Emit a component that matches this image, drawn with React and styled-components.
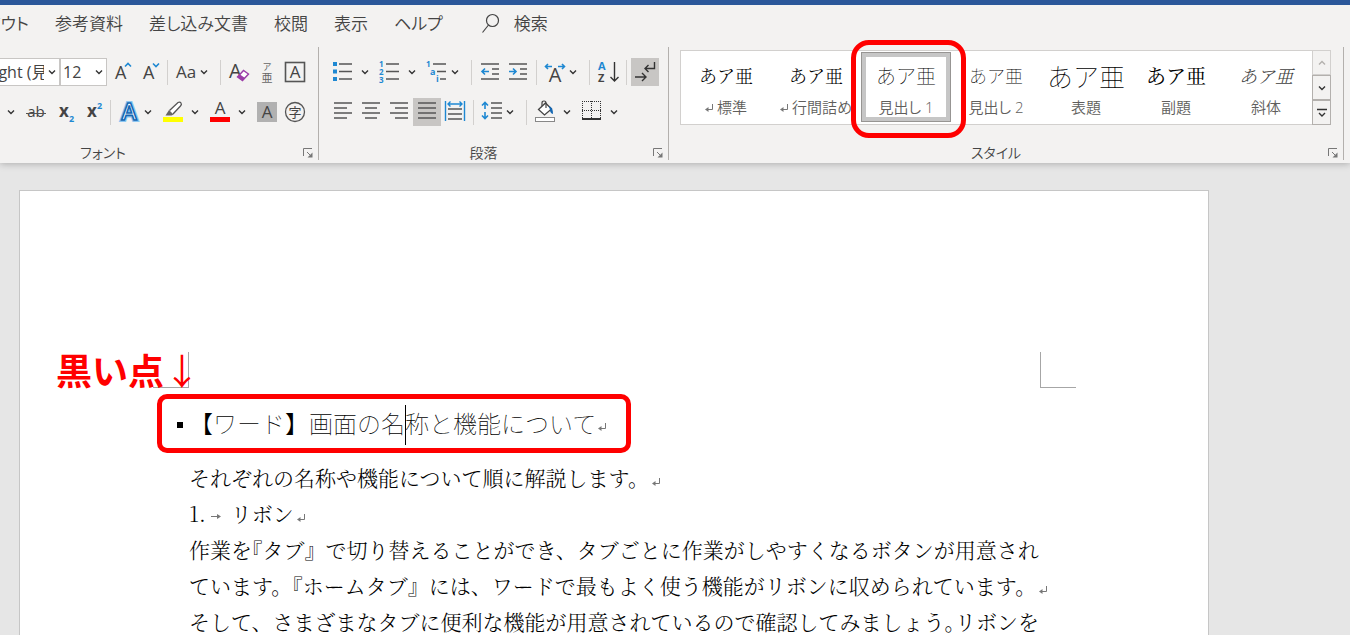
import React, { useState } from "react";
import styled, { createGlobalStyle } from "styled-components";

const BLUE = "#1e88d2";
const INK = "#444444";
const RED = "#ff0000";

const GlobalStyle = createGlobalStyle`
  * {
    box-sizing: border-box;
  }
  body {
    margin: 0;
    color: ${INK};
    font-family: "Open Sans", "Noto Sans CJK JP", sans-serif;
    text-spacing-trim: space-all;
  }
  button, select {
    margin: 0;
    padding: 0;
    border: 0;
    background: transparent;
    color: inherit;
    font: inherit;
  }
  svg {
    display: block;
    overflow: visible;
    flex: none;
  }
`;

const Window = styled.div`
  height: 100vh;
  display: flex;
  flex-direction: column;
  overflow: hidden;
  background-color: #e6e6e6;
`;

const Ribbon = styled.header`
  flex: none;
  border-top: 5px solid #2b579a;
  background-color: #f3f2f1;
  box-shadow: 0 1px 7px rgba(0, 0, 0, 0.25);
`;

const Tabs = styled.nav`
  height: 36px;
  display: flex;
  align-items: center;
  gap: 26px;
  font-size: 17px;
  font-family: "Noto Sans CJK JP", sans-serif;
  font-weight: 350;
  font-feature-settings: "palt";
  white-space: nowrap;
`;

const Tab = styled.button`
  flex: none;
  line-height: 24px;
`;

const ClippedTab = styled(Tab)`
  width: 29px;
  display: flex;
  justify-content: flex-end;
  overflow: hidden;
`;

const Search = styled(Tab)`
  display: flex;
  align-items: center;
  gap: 15px;
  margin-left: 13px;
`;

const Groups = styled.div`
  display: flex;
  padding: 6px 6px 3px 0;
`;

const Group = styled.section`
  width: ${(props) => props.$w};
  flex: ${(props) => (props.$grow ? "1" : "none")};
  min-width: 0;
  height: 113px;
  display: flex;
  flex-direction: column;
  gap: 12px;
  padding-top: ${(props) => (props.$grow ? "3px" : "11px")};
  border-right: 1px solid #b3b0ad;
`;

const Row = styled.div`
  height: 28px;
  display: flex;
  align-items: center;
  padding-left: ${(props) => (props.$inset ? "10px" : "0")};
`;

const Footer = styled.div`
  height: 16px;
  display: flex;
  align-items: center;
  margin-top: auto;
  margin-left: ${(props) => props.$shift || "0"};
`;

const Caption = styled.span`
  flex: 1;
  text-align: center;
  font-family: "Noto Sans CJK JP", sans-serif;
  font-size: 14px;
  font-weight: 350;
  line-height: 16px;
  font-feature-settings: "palt";
`;

const Launcher = styled.button`
  width: 20px;
  height: 16px;
  display: flex;
  align-items: center;
  justify-content: center;
`;

const IconButton = styled.button`
  width: ${(props) => props.$w || 28}px;
  height: 28px;
  flex: none;
  background-color: ${(props) => (props.$on ? "#c8c6c4" : "transparent")};
  &:hover {
    background-color: #c8c6c4;
  }
`;

const ArrowButton = styled.button`
  width: 16px;
  height: 28px;
  flex: none;
  display: flex;
  align-items: center;
  justify-content: center;
  margin-right: 3px;
`;

const Sep = styled.span`
  width: 1px;
  height: 25px;
  flex: none;
  margin: 0 4px 0 ${(props) => props.$before || 2}px;
  background-color: #d2d0ce;
`;

const Combo = styled.label`
  position: relative;
  width: ${(props) => props.$w}px;
  height: 28px;
  flex: none;
  display: flex;
  overflow: hidden;
  border: 1px solid #c8c6c4;
  border-left-width: ${(props) => (props.$open ? "0" : "1px")};
  background-color: #ffffff;
`;

const Select = styled.select`
  appearance: none;
  flex: none;
  width: ${(props) => props.$w}px;
  margin-left: ${(props) => props.$shift || 0}px;
  padding-left: 2px;
  font-size: 16px;
`;

const ComboArrow = styled.span`
  position: absolute;
  top: 0;
  right: 0;
  width: 15px;
  height: 100%;
  display: flex;
  align-items: center;
  justify-content: center;
  background-color: #ffffff;
  pointer-events: none;
`;

const GalleryFrame = styled.div`
  padding: 0 12px 0 11px;
`;

const Gallery = styled.div`
  height: 75px;
  display: flex;
  border: 1px solid #d2d0ce;
  background-color: #ffffff;
`;

const Swatches = styled.div`
  flex: 1;
  min-width: 0;
  display: flex;
  align-items: flex-start;
  padding-top: 1px;
`;

const Swatch = styled.button`
  position: relative;
  width: 90px;
  height: 70px;
  flex: none;
  display: flex;
  flex-direction: column;
  align-items: center;
  white-space: nowrap;
  outline: ${(props) => (props.$on ? "1px solid #979593" : "none")};
  outline-offset: -1px;
  box-shadow: ${(props) => (props.$on ? "inset 0 0 0 5px #c6c6c6" : "none")};
`;

const Sample = styled.span`
  height: 32px;
  margin-top: 7px;
  display: flex;
  align-items: center;
  color: ${(props) => props.$color || "#000000"};
  font-family: ${(props) => (props.$sans ? "" : '"Noto Serif CJK JP", ')} "Noto Sans CJK JP", sans-serif;
  font-size: ${(props) => props.$size || 18}px;
  font-weight: ${(props) => props.$weight || 300};
  font-style: ${(props) => (props.$italic ? "italic" : "normal")};
`;

const SwatchName = styled.span`
  height: 20px;
  margin-top: 5px;
  display: flex;
  align-items: center;
  gap: 4px;
  color: #605e5c;
  font-family: "Open Sans", "Noto Sans CJK JP", sans-serif;
  font-size: 15px;
  font-weight: 350;
  font-feature-settings: "palt";
  white-space: pre;
`;

const NameMark = styled.span`
  padding-top: 4px;
`;

const Scroller = styled.div`
  width: 19px;
  margin: -1px;
  display: flex;
  flex-direction: column;
`;

const ScrollButton = styled.button`
  flex: 1;
  display: flex;
  align-items: center;
  justify-content: center;
  border: 1px solid ${(props) => (props.disabled ? "#d2d0ce" : "#b3b0ad")};
  background-color: #f3f2f1;
`;

const Ring = styled.span`
  position: absolute;
  top: ${(props) => props.$top}px;
  left: ${(props) => props.$left}px;
  width: ${(props) => props.$w}px;
  height: ${(props) => props.$h}px;
  z-index: 2;
  border: 5px solid ${RED};
  border-radius: ${(props) => props.$r}px;
  pointer-events: none;
`;

const Workspace = styled.main`
  flex: 1;
  min-height: 0;
  display: flex;
  padding: 27px 141px 0 19px;
`;

const Sheet = styled.article`
  position: relative;
  flex: 1;
  padding-top: 161px;
  border: 1px solid #c6c6c6;
  border-bottom: 0;
  background-color: #ffffff;
  color: #000000;
`;

const CropMarks = styled.div`
  display: flex;
  justify-content: space-between;
  margin: 0 132px 0 133px;
`;

const CropMark = styled.span`
  width: 36px;
  height: 36px;
  border: solid #a6a6a6;
  border-width: ${(props) => (props.$right ? "0 0 1px 1px" : "0 1px 1px 0")};
`;

const Note = styled.strong`
  position: absolute;
  top: 152px;
  left: 36px;
  display: flex;
  color: ${RED};
  font-family: "Noto Sans CJK JP", sans-serif;
  font-size: 36px;
  line-height: 52px;
`;

const NoteArrow = styled.span`
  font-weight: 400;
`;

const HeadingRow = styled.div`
  position: relative;
  height: 36px;
  display: flex;
  align-items: center;
  gap: 6px;
  margin: 17px 0 18px 157px;
`;

const Bullet = styled.span`
  width: 6px;
  height: 6px;
  margin-top: 4px;
  background-color: #000000;
`;

const Heading = styled.h1`
  margin: 0;
  display: flex;
  align-items: center;
  font-family: "Noto Sans CJK JP", sans-serif;
  font-size: 24px;
  font-weight: 100;
  line-height: 36px;
  white-space: nowrap;
`;

const Caret = styled.span`
  width: 1px;
  height: 40px;
  margin: 2px -1px -2px 0;
  background-color: #000000;
`;

const HeadingMark = styled.span`
  padding: 8px 0 0 2px;
`;

const Text = styled.p`
  margin: 0 0 0 169px;
  font-family: "Noto Serif CJK JP", "Noto Sans CJK JP", serif;
  font-size: 21px;
  font-weight: 300;
  line-height: 36px;
  white-space: nowrap;
`;

const Half = styled.span`
  font-feature-settings: "halt";
`;

const Mark = styled.span`
  display: inline-block;
  margin-left: 3px;
`;

const TabMark = styled.span`
  display: inline-block;
  margin: 0 10px 2px 5px;
`;

const Chevron = ({ color = "#333333", up }) => (
  <svg width="8" height="8" fill="none" stroke={color} strokeWidth="1.4">
    <path d={up ? "M1 5.5l3-3 3 3" : "M1 2.5l3 3 3-3"} />
  </svg>
);

const Return = () => (
  <svg width="8" height="8" fill="none" stroke="#777777">
    <path d="M7.5 0v5.5H2" />
    <path d="M0 5.5L3.5 3v5z" fill="#777777" stroke="none" />
  </svg>
);

const Icon = ({ w = 28, children }) => (
  <svg
    width={w}
    height="28"
    fill="none"
    stroke="#555555"
    strokeWidth="1.6"
    fontFamily="Open Sans, Noto Sans CJK JP, sans-serif"
  >
    {children}
  </svg>
);

const T = ({ x, y, size, fill = INK, bold, middle, children }) => (
  <text
    x={x}
    y={y}
    fontSize={size}
    fill={fill}
    stroke="none"
    fontWeight={bold ? 700 : 400}
    textAnchor={middle ? "middle" : "start"}
  >
    {children}
  </text>
);

const Tool = ({ label, w, on, children }) => (
  <IconButton aria-label={label} $w={w} $on={on}>
    <Icon w={w}>{children}</Icon>
  </IconButton>
);

const More = ({ label }) => (
  <ArrowButton aria-label={label + "のオプション"}>
    <Chevron />
  </ArrowButton>
);

const GroupFooter = ({ children, shift }) => (
  <Footer $shift={shift}>
    <Caption>{children}</Caption>
    <Launcher aria-label={children + "の設定"}>
      <svg width="10" height="10" fill="none" stroke="#777777">
        <path d="M.5 9V1.5H9M4 5l4 4" />
        <path d="M9.5 5.5v5h-5z" fill="#777777" stroke="none" />
      </svg>
    </Launcher>
  </Footer>
);

const FontGroup = () => (
  <Group $w="319px">
    <Row>
      <Combo $w={60} $open>
        <Select aria-label="フォント名" $w={120} $shift={-16}>
          <option>Light (見出し)</option>
        </Select>
        <ComboArrow>
          <Chevron />
        </ComboArrow>
      </Combo>
      <Combo $w={47}>
        <Select aria-label="フォント サイズ" $w={46}>
          <option>12</option>
        </Select>
        <ComboArrow>
          <Chevron />
        </ComboArrow>
      </Combo>
      <Tool label="フォントの拡大" w={30}>
        <T x="8" y="21" size="18">A</T>
        <path d="M18 8.5l3-3 3 3" stroke={BLUE} />
      </Tool>
      <Tool label="フォントの縮小">
        <T x="6" y="21" size="18">A</T>
        <path d="M16 5.5l3 3 3-3" stroke={BLUE} />
      </Tool>
      <Sep />
      <Tool label="文字種の変換" w={46}>
        <T x="4" y="20" size="17">Aa</T>
        <path d="M29 12.5l3 3 3-3" stroke="#333333" strokeWidth="1.4" />
      </Tool>
      <Sep />
      <Tool label="書式のクリア">
        <T x="4" y="20" size="20">A</T>
        <path d="M12.5 19l6-6.5 5 3.5-6 6.5z" fill="#ffffff" stroke="#9b3da8" strokeWidth="1.4" />
        <path d="M12.5 19l2.5-2.5 5 3.5-2.5 2.5z" fill="#9b3da8" stroke="none" />
      </Tool>
      <Tool label="ルビ">
        <T x="14" y="12" size="9" fill="#666666" middle>ア</T>
        <T x="14" y="24" size="11" fill="#666666" middle>亜</T>
      </Tool>
      <Tool label="囲み線">
        <rect x="4.5" y="4.5" width="19" height="19" />
        <T x="14" y="20" size="17" middle>A</T>
      </Tool>
    </Row>
    <Row>
      <Tool label="下線のオプション" w={22}>
        <path d="M8 12.5l3 3 3-3" stroke="#333333" strokeWidth="1.4" />
      </Tool>
      <Tool label="取り消し線" w={30}>
        <T x="14" y="19" size="15" middle>ab</T>
        <path d="M4 15.5h20" strokeWidth="1" />
      </Tool>
      <Tool label="下付き">
        <T x="7" y="19" size="17" bold>x</T>
        <T x="17" y="24" size="9" fill={BLUE} bold>2</T>
      </Tool>
      <Tool label="上付き">
        <T x="7" y="19" size="17" bold>x</T>
        <T x="17" y="11" size="9" fill={BLUE} bold>2</T>
      </Tool>
      <Sep />
      <Tool label="文字の効果" w={25}>
        <g fontSize="23" fontWeight="600" textAnchor="middle">
          <text x="14" y="22" stroke="#8cc6f0" strokeWidth="4">A</text>
          <text x="14" y="22" stroke="#1467b3" strokeWidth="1.6" fill="#ffffff">A</text>
        </g>
      </Tool>
      <More label="文字の効果" />
      <Tool label="蛍光ペン">
        <rect x="4" y="19" width="20" height="5" fill="#ffff00" stroke="none" />
        <path d="M10.5 12.5L19 4.5q2-1 3 .5t-.5 3L14 16" fill="#ffffff" strokeWidth="1.3" />
        <path d="M10 12l4.5 4.5-2 1H6.5z" fill="#666666" stroke="none" />
      </Tool>
      <More label="蛍光ペン" />
      <Tool label="フォントの色">
        <T x="14" y="16" size="17" middle>A</T>
        <rect x="4" y="19" width="20" height="5" fill={RED} stroke="none" />
      </Tool>
      <More label="フォントの色" />
      <Tool label="文字の網かけ">
        <rect x="4" y="4" width="20" height="20" fill="#b1b1b1" stroke="none" />
        <T x="14" y="20" size="17" middle>A</T>
      </Tool>
      <Tool label="囲い文字">
        <circle cx="14" cy="14" r="9.5" strokeWidth="1.3" />
        <T x="14" y="19" size="13" middle>字</T>
      </Tool>
    </Row>
    <GroupFooter shift="-92px">フォント</GroupFooter>
  </Group>
);

const ParagraphGroup = () => (
  <Group $w="350px">
    <Row $inset>
      <Tool label="箇条書き">
        <path d="M10 6h13M10 13.5h13M10 21h13" />
        <path d="M4 4h4v4H4zM4 11.5h4v4H4zM4 19h4v4H4z" fill={BLUE} stroke="none" />
      </Tool>
      <More label="箇条書き" />
      <Tool label="段落番号">
        <path d="M10 6h13M10 13.5h13M10 21h13" />
        <T x="3" y="9" size="8" fill={BLUE} bold>1</T>
        <T x="3" y="17" size="8" fill={BLUE} bold>2</T>
        <T x="3" y="25" size="8" fill={BLUE} bold>3</T>
      </Tool>
      <More label="段落番号" />
      <Tool label="アウトライン" w={24}>
        <path d="M10 6h13M14 13.5h9M17 21h6" />
        <T x="3" y="9" size="8" fill={BLUE} bold>1</T>
        <T x="7" y="17" size="9" fill={BLUE} bold>a</T>
        <T x="13" y="24" size="9" fill={BLUE} bold>i</T>
      </Tool>
      <More label="アウトライン" />
      <Sep $before={5} />
      <Tool label="インデントを減らす">
        <path d="M5 6h18M16 11h7M16 16h7M5 21h18" />
        <path d="M13 13.5H6M9 10.5l-3 3 3 3" stroke={BLUE} />
      </Tool>
      <Tool label="インデントを増やす">
        <path d="M5 6h18M16 11h7M16 16h7M5 21h18" />
        <path d="M5 13.5h7M9 10.5l3 3-3 3" stroke={BLUE} />
      </Tool>
      <Sep $before={4} />
      <Tool label="拡張書式" w={24}>
        <path d="M11 8.5H4.5M7 6L4.5 8.5 7 11M17 8.5h6.5M21 6l2.5 2.5L21 11" stroke={BLUE} />
        <T x="14" y="24" size="20" middle>A</T>
      </Tool>
      <More label="拡張書式" />
      <Sep $before={5} />
      <Tool label="並べ替え">
        <T x="4" y="12" size="11" fill={BLUE} bold>A</T>
        <T x="4" y="24" size="11" bold>Z</T>
        <path d="M20.5 4v19M16.5 19l4 4 4-4" stroke="#333333" strokeWidth="1.4" />
      </Tool>
      <Sep $before={4} />
      <Tool label="編集記号の表示" on>
        <path
          d="M23.5 4v6.5H14M17.5 7L14 10.5l3.5 3.5M4 19h10.5M11 15l4 4-4 4"
          stroke="#333333"
          strokeWidth="1.4"
        />
      </Tool>
    </Row>
    <Row $inset>
      <Tool label="左揃え">
        <path d="M5 5h18M5 10h13M5 15h18M5 20h13" />
      </Tool>
      <Tool label="中央揃え">
        <path d="M5 5h18M8 10h12M5 15h18M8 20h12" />
      </Tool>
      <Tool label="右揃え">
        <path d="M5 5h18M10 10h13M5 15h18M10 20h13" />
      </Tool>
      <Tool label="両端揃え" on>
        <path d="M5 5h18M5 10h18M5 15h18M5 20h18" />
      </Tool>
      <Tool label="均等割り付け">
        <path d="M7 11h14M7 16h14M7 21h14" />
        <path
          d="M4.5 3v20M23.5 3v20M7 6h14M9.5 3.5L7 6l2.5 2.5M18.5 3.5L21 6l-2.5 2.5"
          stroke={BLUE}
          strokeWidth="1.4"
        />
      </Tool>
      <Sep $before={4} />
      <Tool label="行と段落の間隔" w={24}>
        <path d="M13 5h11M13 10h11M13 15h11M13 20h11" />
        <path d="M7 11V4.5M4 7.5l3-3 3 3M7 14v6.5M4 17.5l3 3 3-3" stroke={BLUE} />
      </Tool>
      <More label="行と段落の間隔" />
      <Sep $before={5} />
      <Tool label="塗りつぶし">
        <path d="M7.5 11.5l7-6.5 6 6-7 6z" fill="#ffffff" stroke="#444444" strokeWidth="1.3" />
        <path d="M11 8V5q0-2 2-2t2 2v5" stroke="#444444" strokeWidth="1.2" />
        <path d="M18 8q4 1 4 8-3-1-3-4z" fill="#1467b3" stroke="none" />
        <rect x="4.5" y="19.5" width="19" height="4" fill="#ffffff" stroke="#888888" strokeWidth="1" />
      </Tool>
      <More label="塗りつぶし" />
      <Tool label="罫線">
        <path
          d="M4 3.5h19M4 12.5h19M4.5 3v19M13.5 3v19M22.5 3v19"
          strokeWidth="1"
          strokeDasharray="1 1"
          stroke="#333333"
        />
        <path d="M4 21h19" stroke="#333333" strokeWidth="2" />
      </Tool>
      <More label="罫線" />
    </Row>
    <GroupFooter>段落</GroupFooter>
  </Group>
);

const styleItems = [
  { name: "標準", mark: true },
  { name: "行間詰め", mark: true },
  { name: "見出し 1", sans: true, size: 20, weight: 100 },
  { name: "見出し 2", sans: true, size: 18, weight: 100 },
  { name: "表題", sans: true, size: 26, weight: 100 },
  { name: "副題", size: 20, weight: 400 },
  { name: "斜体", italic: true, color: "#404040" },
];

const StyleGroup = () => {
  const [selected, setSelected] = useState("見出し 1");

  return (
    <Group $grow>
      <GalleryFrame>
        <Gallery>
          <Swatches>
            {styleItems.map((item) => (
              <Swatch
                key={item.name}
                $on={item.name === selected}
                onClick={() => setSelected(item.name)}
              >
                <Sample
                  $sans={item.sans}
                  $size={item.size}
                  $weight={item.weight}
                  $italic={item.italic}
                  $color={item.color}
                >
                  あア亜
                </Sample>
                <SwatchName>
                  {item.mark && (
                    <NameMark>
                      <Return />
                    </NameMark>
                  )}
                  {item.name}
                </SwatchName>
                {item.name === "見出し 1" && (
                  <Ring $top={-12} $left={-10} $w={115} $h={98} $r={18} />
                )}
              </Swatch>
            ))}
          </Swatches>
          <Scroller>
            <ScrollButton aria-label="前の行" disabled>
              <Chevron color="#b3b0ad" up />
            </ScrollButton>
            <ScrollButton aria-label="次の行">
              <Chevron />
            </ScrollButton>
            <ScrollButton aria-label="その他">
              <svg width="10" height="10" fill="none" stroke="#333333" strokeWidth="1.4">
                <path d="M0 1.5h10M2 5l3 3 3-3" />
              </svg>
            </ScrollButton>
          </Scroller>
        </Gallery>
      </GalleryFrame>
      <GroupFooter>スタイル</GroupFooter>
    </Group>
  );
};

const App = () => {
  return (
    <Window>
      <GlobalStyle />
      <Ribbon>
        <Tabs>
          <ClippedTab>レイアウト</ClippedTab>
          <Tab>参考資料</Tab>
          <Tab>差し込み文書</Tab>
          <Tab>校閲</Tab>
          <Tab>表示</Tab>
          <Tab>ヘルプ</Tab>
          <Search>
            <svg width="17" height="19" fill="none" stroke={INK} strokeWidth="1.2">
              <circle cx="10.5" cy="6.5" r="6" />
              <path d="M6.5 11L.5 18.5" />
            </svg>
            検索
          </Search>
        </Tabs>
        <Groups>
          <FontGroup />
          <ParagraphGroup />
          <StyleGroup />
        </Groups>
      </Ribbon>
      <Workspace>
        <Sheet>
          <CropMarks>
            <CropMark />
            <CropMark $right />
          </CropMarks>
          <Note>
            黒い点<NoteArrow>↓</NoteArrow>
          </Note>
          <HeadingRow>
            <Bullet />
            <Heading>
              【ワード】画面の名
              <Caret />
              称と機能について
              <HeadingMark>
                <Return />
              </HeadingMark>
            </Heading>
            <Ring $top={-11} $left={-20} $w={474} $h={59} $r={10} />
          </HeadingRow>
          <Text>
            それぞれの名称や機能について順に解説します。
            <Mark>
              <Return />
            </Mark>
          </Text>
          <Text>
            1.
            <TabMark>
              <svg width="10" height="7" fill="none" stroke="#777777">
                <path d="M0 3.5h7" />
                <path d="M10 3.5L6 1v5z" fill="#777777" stroke="none" />
              </svg>
            </TabMark>
            リボン
            <Mark>
              <Return />
            </Mark>
          </Text>
          <Text>
            作業を<Half>『</Half>タブ』で切り替えることができ、タブごとに作業がしやすくなるボタンが用意され
            <br />
            ています。<Half>『</Half>ホームタブ』には、ワードで最もよく使う機能がリボンに収められています。
            <Mark>
              <Return />
            </Mark>
          </Text>
          <Text>
            そして、さまざまなタブに便利な機能が用意されているので確認してみましょう<Half>。</Half>リボンを
          </Text>
        </Sheet>
      </Workspace>
    </Window>
  );
};

export default App;
